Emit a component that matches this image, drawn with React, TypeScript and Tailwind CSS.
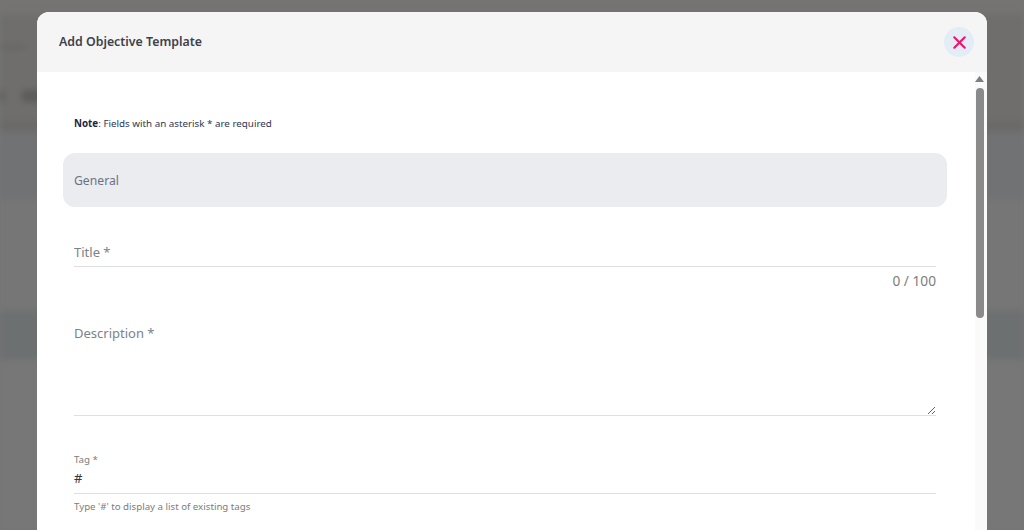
import React from "react"
import { X } from "lucide-react"

const FONT = "font-['Noto_Sans',sans-serif]"

const Backdrop: React.FC = () => (
  <div className="flex h-full flex-col blur-[3px]">
    <div className="h-[14px] shrink-0 bg-[#757472]" />
    <div className="flex h-[34px] shrink-0 items-end bg-[#6f6e6c]">
      <div className="-mb-[10px] h-[12px] w-[26px] rounded bg-[#5c5c5a]" />
    </div>
    <div className="flex h-[72px] shrink-0 items-start gap-[18px] bg-[#6f6e6c] pt-[42px]">
      <div className="h-[12px] w-[4px] bg-[#5c5c5a]" />
      <div className="h-[12px] w-[60px] bg-[#5c5c5a]" />
    </div>
    <div className="h-[12px] shrink-0 bg-[#6b6a69]" />
    <div className="h-[68px] shrink-0 bg-[#717274]" />
    <div className="h-[110px] shrink-0 bg-[#767676]" />
    <div className="h-[50px] shrink-0 bg-[#6d7071]" />
    <div className="flex-1 bg-[#777777]" />
  </div>
)

export default function App() {
  return (
    <div className={`relative h-[530px] w-[1024px] overflow-hidden bg-[#747474] ${FONT}`}>
      <Backdrop />
      <div className="absolute left-[37px] top-[12px] flex h-[518px] w-[950px] flex-col overflow-hidden rounded-t-[12px] bg-white">
        <div className="flex h-[60px] shrink-0 items-center justify-between bg-[#f5f5f5] pl-[22px] pr-[13px]">
          <h2 className="text-[12.35px] font-semibold text-[#3f4148]">Add Objective Template</h2>
          <button className="flex h-[30px] w-[30px] items-center justify-center rounded-full bg-[#e2edf5]">
            <X size={21} strokeWidth={2.4} className="text-[#f5106f]" />
          </button>
        </div>
        <div className="flex min-h-0 flex-1">
          <div className="min-w-0 flex-1 pl-[26px] pr-[28px]">
            <p className="mt-[45px] pl-[11px] text-[9.8px] leading-[14px] text-[#2f3553]">
              <strong className="font-bold text-[#1f2540]">Note</strong>: Fields with an asterisk * are required
            </p>
            <div className="mt-[22px] flex h-[54px] items-center rounded-[12px] bg-[#ebecf0] pl-[11px] pt-[2px] text-[12.2px] text-[#6b7280]">
              General
            </div>
            <div className="px-[11px]">
              <input
                placeholder="Title *"
                className="mt-[29px] h-[31px] w-full border-b border-[#dfdfdf] pt-[2px] text-[13px] outline-none placeholder:text-[#7d828a]"
              />
              <div className="mt-[5px] text-right text-[13.7px] leading-[18px] text-[#7d7d7d]">0 / 100</div>
              <textarea
                placeholder="Description *"
                className="mt-[21px] block h-[105px] w-full border-b border-[#dfdfdf] pt-[13px] text-[13px] outline-none placeholder:text-[#7d828a]"
              />
              <div className="mt-[37px] text-[9.7px] leading-[14px] text-[#7d7d7d]">Tag *</div>
              <div className="mt-[1px] h-[26px] border-b border-[#dfdfdf] text-[13px] leading-[20px] text-[#33363d]">#</div>
              <div className="mt-[6px] text-[9.7px] leading-[14px] text-[#7d7d7d]">Type '#' to display a list of existing tags</div>
            </div>
          </div>
          <div className="flex w-[12px] shrink-0 flex-col items-center bg-[#fafafa] pr-[3px]">
            <svg width="9" height="6" viewBox="0 0 9 6" className="mt-[4px]">
              <path d="M4.5 0 L9 6 L0 6 Z" fill="#7f7f7f" />
            </svg>
            <div className="mt-[6px] h-[230px] w-[8px] rounded-full bg-[#8a8a8a]" />
          </div>
        </div>
      </div>
    </div>
  )
}
